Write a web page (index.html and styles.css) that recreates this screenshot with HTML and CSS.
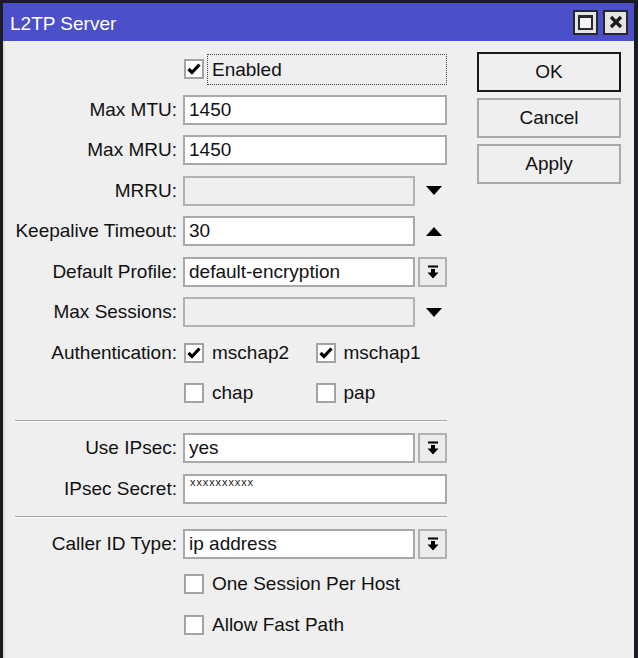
FILE: index.html
```html
<!DOCTYPE html>
<html>
<head>
<meta charset="utf-8">
<link rel="stylesheet" href="styles.css">
</head>
<body>
<div class="window">
  <div class="titlebar">
    <span class="title">L2TP Server</span>
    <div class="tbtns">
      <span class="tbtn"><span class="maxicon"></span></span>
      <span class="tbtn">
        <svg width="14" height="14" viewBox="0 0 14 14"><path d="M2 2 L12 12 M12 2 L2 12" stroke="#1a1a1a" stroke-width="3.2" fill="none"/></svg>
      </span>
    </div>
  </div>
  <div class="body">
    <div class="form">
      <div class="group">
        <div class="row">
          <span class="label"></span>
          <div class="ctl checks">
            <span class="cb on"><svg width="14" height="12" viewBox="0 0 14 12"><path d="M1.5 6 L5 9.5 L12.5 1.5" stroke="#000" stroke-width="3.2" fill="none"/></svg></span>
            <span class="cblabel focus">Enabled</span>
          </div>
        </div>
        <div class="row">
          <span class="label">Max MTU:</span>
          <div class="ctl"><span class="field">1450</span></div>
        </div>
        <div class="row">
          <span class="label">Max MRU:</span>
          <div class="ctl"><span class="field">1450</span></div>
        </div>
        <div class="row">
          <span class="label">MRRU:</span>
          <div class="ctl"><span class="field disabled"></span><span class="tri"><svg width="16" height="9" viewBox="0 0 16 9"><path d="M0 0 H16 L8 9 Z" fill="#000"/></svg></span></div>
        </div>
        <div class="row">
          <span class="label">Keepalive Timeout:</span>
          <div class="ctl"><span class="field">30</span><span class="tri"><svg width="16" height="9" viewBox="0 0 16 9"><path d="M0 9 H16 L8 0 Z" fill="#000"/></svg></span></div>
        </div>
        <div class="row">
          <span class="label">Default Profile:</span>
          <div class="ctl"><span class="field">default-encryption</span><span class="dd"><svg width="12" height="14" viewBox="0 0 12 14"><rect x="1" y="0.5" width="10" height="2" fill="#000"/><rect x="4" y="4" width="4" height="4" fill="#000"/><path d="M0.5 7.5 H11.5 L6 13.5 Z" fill="#000"/></svg></span></div>
        </div>
        <div class="row">
          <span class="label">Max Sessions:</span>
          <div class="ctl"><span class="field disabled"></span><span class="tri"><svg width="16" height="9" viewBox="0 0 16 9"><path d="M0 0 H16 L8 9 Z" fill="#000"/></svg></span></div>
        </div>
        <div class="row">
          <span class="label">Authentication:</span>
          <div class="ctl pair">
            <div class="checks">
              <span class="cb on"><svg width="14" height="12" viewBox="0 0 14 12"><path d="M1.5 6 L5 9.5 L12.5 1.5" stroke="#000" stroke-width="3.2" fill="none"/></svg></span>
              <span class="cblabel">mschap2</span>
            </div>
            <div class="checks">
              <span class="cb on"><svg width="14" height="12" viewBox="0 0 14 12"><path d="M1.5 6 L5 9.5 L12.5 1.5" stroke="#000" stroke-width="3.2" fill="none"/></svg></span>
              <span class="cblabel">mschap1</span>
            </div>
          </div>
        </div>
        <div class="row">
          <span class="label"></span>
          <div class="ctl pair">
            <div class="checks"><span class="cb"></span><span class="cblabel">chap</span></div>
            <div class="checks"><span class="cb"></span><span class="cblabel">pap</span></div>
          </div>
        </div>
      </div>
      <div class="sep"></div>
      <div class="group">
        <div class="row">
          <span class="label">Use IPsec:</span>
          <div class="ctl"><span class="field">yes</span><span class="dd"><svg width="12" height="14" viewBox="0 0 12 14"><rect x="1" y="0.5" width="10" height="2" fill="#000"/><rect x="4" y="4" width="4" height="4" fill="#000"/><path d="M0.5 7.5 H11.5 L6 13.5 Z" fill="#000"/></svg></span></div>
        </div>
        <div class="row">
          <span class="label">IPsec Secret:</span>
          <div class="ctl"><span class="field secret">xxxxxxxxxx</span></div>
        </div>
      </div>
      <div class="sep"></div>
      <div class="group">
        <div class="row">
          <span class="label">Caller ID Type:</span>
          <div class="ctl"><span class="field">ip address</span><span class="dd"><svg width="12" height="14" viewBox="0 0 12 14"><rect x="1" y="0.5" width="10" height="2" fill="#000"/><rect x="4" y="4" width="4" height="4" fill="#000"/><path d="M0.5 7.5 H11.5 L6 13.5 Z" fill="#000"/></svg></span></div>
        </div>
        <div class="row">
          <span class="label"></span>
          <div class="ctl checks"><span class="cb"></span><span class="cblabel">One Session Per Host</span></div>
        </div>
        <div class="row">
          <span class="label"></span>
          <div class="ctl checks"><span class="cb"></span><span class="cblabel">Allow Fast Path</span></div>
        </div>
      </div>
    </div>
    <div class="actions">
      <button class="btn default">OK</button>
      <button class="btn">Cancel</button>
      <button class="btn">Apply</button>
    </div>
  </div>
</div>
</body>
</html>
```
FILE: styles.css
```css
html, body {
  margin: 0;
  padding: 0;
  background: #efefef;
}
body {
  width: 638px;
  height: 658px;
  overflow: hidden;
  font-family: "Liberation Sans", Arial, sans-serif;
  font-size: 19px;
  color: #111;
}
.window {
  box-sizing: border-box;
  width: 638px;
  height: 658px;
  display: flex;
  flex-direction: column;
  border-top: 3px solid #1b1b22;
  border-left: 3px solid #1b1b22;
  border-right: 4px solid #1b1b22;
  background: #efefef;
}
.titlebar {
  height: 38px;
  flex: none;
  background: #4b4fc9;
  display: flex;
  align-items: center;
  justify-content: space-between;
  padding-left: 7px;
  padding-right: 6px;
}
.title {
  color: #fff;
  line-height: 1;
  padding-top: 2px;
}
.tbtns {
  display: flex;
  gap: 5px;
}
.tbtn {
  box-sizing: border-box;
  width: 25px;
  height: 25px;
  border: 2px solid #26262c;
  background: #e4e4e4;
  display: flex;
  align-items: center;
  justify-content: center;
}
.maxicon {
  box-sizing: border-box;
  width: 15px;
  height: 15px;
  border: 2px solid #2a2a2a;
  border-top-width: 3px;
  background: #f4f4f4;
}
.body {
  flex: 1;
  display: flex;
  align-items: flex-start;
  padding-top: 11px;
  border-left: 2px solid #dcdcdc;
}
.form {
  padding-left: 10px;
  padding-top: 2px;
  width: 432px;
}
.group {
  display: flex;
  flex-direction: column;
  gap: 10.5px;
}
.sep {
  height: 0;
  border-top: 1px solid #a6a6a6;
  border-bottom: 1px solid #fafafa;
  margin: 12px 0 11px;
}
.row {
  display: grid;
  grid-template-columns: 162px 264px;
  column-gap: 6px;
  height: 30px;
  align-items: center;
}
.label {
  text-align: right;
  white-space: nowrap;
  line-height: 30px;
}
.ctl {
  display: flex;
  height: 30px;
  gap: 3px;
}
.field {
  box-sizing: border-box;
  flex: 1;
  height: 30px;
  border: 2px solid #a9a9a9;
  background: #fff;
  padding-left: 4px;
  line-height: 26px;
  white-space: nowrap;
  overflow: hidden;
}
.field.disabled {
  background: #efefef;
  border-color: #b3b3b3;
}
.field.secret {
  font-size: 11px;
  line-height: 13px;
  letter-spacing: 0.9px;
  padding-left: 5px;
  color: #222;
}
.tri {
  box-sizing: border-box;
  width: 29px;
  display: flex;
  align-items: center;
  justify-content: center;
  padding-left: 3px;
}
.dd {
  box-sizing: border-box;
  width: 29px;
  height: 30px;
  border: 2px solid #b0b0b0;
  background: #ececec;
  display: flex;
  align-items: center;
  justify-content: center;
}
.checks {
  display: flex;
  align-items: center;
  gap: 8px;
}
.ctl.checks {
  padding-left: 1px;
}
.pair {
  gap: 0;
  padding-left: 1px;
}
.pair .checks {
  width: 134px;
}
.cb {
  box-sizing: border-box;
  width: 20px;
  height: 20px;
  border: 2px solid #a3a3a3;
  background: #fff;
  display: flex;
  align-items: center;
  justify-content: center;
  flex: none;
}
.cblabel {
  white-space: nowrap;
  line-height: 30px;
}
.cblabel.focus {
  margin-left: -5px;
  padding-left: 4px;
  box-sizing: border-box;
  width: 240px;
  height: 31px;
  border: 1px dotted #444;
  line-height: 29px;
}
.actions {
  margin-left: 30px;
  width: 144px;
  display: flex;
  flex-direction: column;
  gap: 6px;
}
.btn {
  box-sizing: border-box;
  height: 40px;
  width: 144px;
  background: #efefef;
  border: 2px solid #a9a9a9;
  font-family: inherit;
  font-size: 19px;
  color: #111;
  padding: 0;
}
.btn.default {
  border-color: #1a1a1a;
}
```
